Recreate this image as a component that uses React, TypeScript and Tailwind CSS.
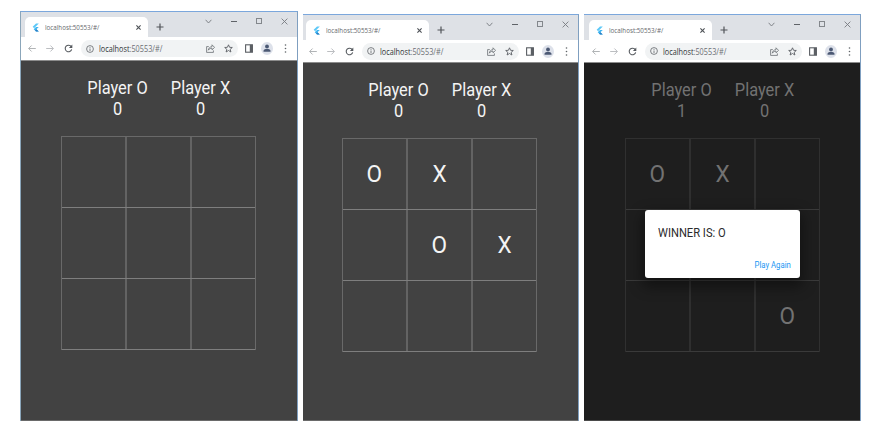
import React from "react";

type Mark = "O" | "X" | "";

interface GameWindowProps {
  frame: string;
  inset: string;
  stripHeight: string;
  toolbarHeight: string;
  boardOffset: string;
  scoreO: number;
  scoreX: number;
  cells: Mark[];
  dimmed?: boolean;
  children?: React.ReactNode;
}

const URL_TEXT = "localhost:50553/#/";

function FlutterLogo() {
  return (
    <svg width="7" height="9" viewBox="0 0 7 9">
      <path d="M4 0.4H6.8L2.1 5.2L0.7 3.8Z" fill="#5cc8f8" />
      <path d="M4 4H6.8L4.4 6.3L6.8 8.6H4L1.7 6.3Z" fill="#3fb6f2" />
      <path d="M3.1 7.6L4.4 6.3L6.8 8.6H4Z" fill="#2b7fc4" />
    </svg>
  );
}

function WindowButtons() {
  return (
    <div className="ml-auto flex h-[18px] w-[101px] self-start text-[#777b80]">
      <span className="flex flex-1 items-center justify-center">
        <svg width="7" height="5" viewBox="0 0 7 5" fill="none" stroke="currentColor" strokeWidth="0.9">
          <path d="M0.6 0.8L3.5 4L6.4 0.8" />
        </svg>
      </span>
      <span className="flex flex-1 items-center justify-center">
        <span className="h-px w-[6px] bg-[#5f6368]" />
      </span>
      <span className="flex flex-1 items-center justify-center">
        <span className="h-[6px] w-[6px] border border-[#83878c]" />
      </span>
      <span className="flex flex-1 items-center justify-center">
        <svg width="7" height="7" viewBox="0 0 7 7" fill="none" stroke="currentColor" strokeWidth="0.9">
          <path d="M0.6 0.6L6.4 6.4M6.4 0.6L0.6 6.4" />
        </svg>
      </span>
    </div>
  );
}

function TabStrip({ height, inset }: { height: string; inset: string }) {
  return (
    <div className={`flex shrink-0 items-end bg-[#dee1e6] ${height} ${inset}`}>
      <div className="flex h-[20px] w-[123px] items-center rounded-t-[5px] bg-white">
        <span className="ml-[7px] flex w-[13px] items-center">
          <FlutterLogo />
        </span>
        <span className="w-[90px] origin-left scale-x-[0.78] whitespace-nowrap text-[8px] leading-none text-[#66696d]">
          {URL_TEXT}
        </span>
        <svg className="ml-[1px]" width="5" height="5" viewBox="0 0 5 5" fill="none" stroke="#4d5156" strokeWidth="1.1">
          <path d="M0.4 0.4L4.6 4.6M4.6 0.4L0.4 4.6" />
        </svg>
      </div>
      <span className="ml-px flex h-[20px] w-[22px] items-center justify-center">
        <svg width="8" height="8" viewBox="0 0 8 8" fill="none" stroke="#505459" strokeWidth="1.2">
          <path d="M4 0.5V7.5M0.5 4H7.5" />
        </svg>
      </span>
      <WindowButtons />
    </div>
  );
}

function Toolbar({ height, inset }: { height: string; inset: string }) {
  const slot = "flex w-[18px] shrink-0 items-center justify-center";
  return (
    <div className={`flex shrink-0 items-center border-b border-[#8c8c8c] bg-white ${height} ${inset}`}>
      <span className={`-ml-[2px] ${slot}`}>
        <svg width="8" height="7" viewBox="0 0 8 7" fill="none" stroke="#a8abae" strokeWidth="0.9">
          <path d="M7.8 3.5H0.8M3.6 0.5L0.6 3.5L3.6 6.5" />
        </svg>
      </span>
      <span className={slot}>
        <svg width="8" height="7" viewBox="0 0 8 7" fill="none" stroke="#b4b7ba" strokeWidth="0.9">
          <path d="M0.2 3.5H7.2M4.4 0.5L7.4 3.5L4.4 6.5" />
        </svg>
      </span>
      <span className={slot}>
        <svg width="9" height="9" viewBox="0 0 9 9">
          <path d="M7.3 2.7A3.3 3.3 0 1 0 7.7 5.4" fill="none" stroke="#55595e" strokeWidth="1.1" />
          <path d="M8.3 0.6V4H4.9Z" fill="#55595e" />
        </svg>
      </span>
      <div className="ml-[4px] flex h-[17px] w-[157px] shrink-0 items-center rounded-full bg-[#f1f3f4]">
        <svg className="ml-[5px]" width="8" height="8" viewBox="0 0 8 8" fill="none" stroke="#5f6368" strokeWidth="0.8">
          <circle cx="4" cy="4" r="3.4" />
          <path d="M4 3.5V6M4 2V2.8" />
        </svg>
        <span className="ml-[5px] w-[102px] origin-left scale-x-[0.81] whitespace-nowrap text-[9px] leading-none text-[#6c7074]">
          <span className="text-[#303337]">localhost</span>:50553/#/
        </span>
        <span className={slot}>
          <svg width="9" height="9" viewBox="0 0 9 9" fill="none" stroke="#6a6e73" strokeWidth="0.8">
            <path d="M2.8 2.6H0.6V8.4H7.4V6.4" />
            <path d="M2.3 6.2C2.6 4 3.9 2.8 6 2.7V0.8L8.6 3.4L6 5.8V4.2C4.3 4.2 3.2 4.8 2.3 6.2Z" />
          </svg>
        </span>
        <span className={slot}>
          <svg width="9" height="9" viewBox="0 0 9 9" fill="none" stroke="#5b5f64" strokeWidth="0.9">
            <path d="M4.5 0.8L5.6 3.3L8.3 3.5L6.2 5.3L6.9 8L4.5 6.5L2.1 8L2.8 5.3L0.7 3.5L3.4 3.3Z" />
          </svg>
        </span>
      </div>
      <span className={`ml-[2px] ${slot}`}>
        <svg width="8" height="9" viewBox="0 0 8 9">
          <rect x="0.6" y="0.8" width="6.8" height="7.4" fill="none" stroke="#5b5f64" strokeWidth="1.1" />
          <rect x="4.8" y="0.8" width="2.8" height="7.4" fill="#5b5f64" />
        </svg>
      </span>
      <span className={slot}>
        <svg width="12" height="13" viewBox="0 0 12 13">
          <ellipse cx="6" cy="6.5" rx="6" ry="6.4" fill="#dde1ea" />
          <circle cx="6" cy="4.5" r="1.9" fill="#4b5873" />
          <path d="M2.5 9.7V8.7C2.5 7.3 4.6 6.9 6 6.9S9.5 7.3 9.5 8.7V9.7Z" fill="#4b5873" />
        </svg>
      </span>
      <span className={slot}>
        <svg width="3" height="9" viewBox="0 0 3 9" fill="#5f6368">
          <circle cx="1.5" cy="1" r="0.8" />
          <circle cx="1.5" cy="4.5" r="0.8" />
          <circle cx="1.5" cy="8" r="0.8" />
        </svg>
      </span>
    </div>
  );
}

function Score({ name, value }: { name: string; value: number }) {
  return (
    <div className="w-[83px] scale-x-[0.91] whitespace-nowrap text-center text-[18px] leading-[21px]">
      <div>{name}</div>
      <div>{value}</div>
    </div>
  );
}

function Board({ cells, dimmed }: { cells: Mark[]; dimmed?: boolean }) {
  const outer = dimmed ? "border-[#303030]" : "border-[#696969]";
  const row = dimmed ? "border-[#3a3a3a]" : "border-[#7e7e7e]";
  const col = dimmed ? "border-[#2f2f2f]" : "border-[#636363]";
  return (
    <div className={`ml-[36px] mt-[17px] w-[195px] border-x border-t ${outer}`}>
      {[0, 1, 2].map((r) => (
        <div key={r} className={`flex h-[71px] border-b ${row}`}>
          {[0, 1, 2].map((c) => (
            <div
              key={c}
              className={`flex flex-1 items-center justify-center text-[24px] leading-none ${c < 2 ? "border-r-2" : ""} ${col}`}
            >
              <span className="scale-x-[0.94]">{cells[r * 3 + c]}</span>
            </div>
          ))}
        </div>
      ))}
    </div>
  );
}

function GameWindow(props: GameWindowProps) {
  const { dimmed } = props;
  return (
    <section
      className={`relative flex shrink-0 flex-col border-r border-t border-r-[#7f9fc0] border-t-[#7ba7dc] font-['Open_Sans','Noto_Sans',sans-serif] ${props.frame}`}
    >
      <TabStrip height={props.stripHeight} inset={props.inset} />
      <Toolbar height={props.toolbarHeight} inset={props.inset} />
      <main
        className={`flex-1 border-b font-[Roboto,sans-serif] ${
          dimmed ? "border-[#4a4a4a] bg-[#1e1e1e] text-[#727272]" : "border-[#6a6a6a] bg-[#424242] text-[#f4f4f4]"
        } ${props.inset} ${props.boardOffset}`}
      >
        <div className="ml-[50.5px] flex">
          <Score name="Player O" value={props.scoreO} />
          <Score name="Player X" value={props.scoreX} />
        </div>
        <Board cells={props.cells} dimmed={dimmed} />
      </main>
      {props.children}
    </section>
  );
}

function WinnerDialog() {
  return (
    <div className="absolute left-[61px] top-[195px] flex h-[68px] w-[155px] flex-col justify-between rounded-[3px] bg-white pb-[8px] pl-[13px] pr-[9px] pt-[16px] font-[Roboto,sans-serif] shadow-[0_6px_14px_3px_rgba(0,0,0,0.4)]">
      <p className="origin-left scale-x-[0.93] text-[12px] leading-[14px] text-[#2b2b2b]">WINNER IS: O</p>
      <button className="origin-right scale-x-[0.91] self-end whitespace-nowrap text-[8.5px] leading-[10px] text-[#2196f3]">
        Play Again
      </button>
    </div>
  );
}

export default function App() {
  return (
    <div className="flex h-[432px] w-[874px] items-start overflow-hidden bg-white pl-[20px] pt-[11px]">
      <GameWindow
        frame="h-[410px] w-[278px] border-l border-l-[#8ba6ba]"
        inset="pl-[4px]"
        stripHeight="h-[25px]"
        toolbarHeight="h-[24px]"
        boardOffset="pt-[16px]"
        scoreO={0}
        scoreX={0}
        cells={["", "", "", "", "", "", "", "", ""]}
      />
      <GameWindow
        frame="ml-[5px] mt-[3px] h-[407px] w-[276px]"
        inset="pl-[3px]"
        stripHeight="h-[25px]"
        toolbarHeight="h-[23px]"
        boardOffset="pt-[16px]"
        scoreO={0}
        scoreX={0}
        cells={["O", "X", "", "", "O", "X", "", "", ""]}
      />
      <GameWindow
        frame="ml-[5px] mt-[3px] h-[407px] w-[277px]"
        inset="pl-[5px]"
        stripHeight="h-[25px]"
        toolbarHeight="h-[23px]"
        boardOffset="pt-[16px]"
        scoreO={1}
        scoreX={0}
        cells={["O", "X", "", "", "", "", "", "", "O"]}
        dimmed
      >
        <WinnerDialog />
      </GameWindow>
    </div>
  );
}
